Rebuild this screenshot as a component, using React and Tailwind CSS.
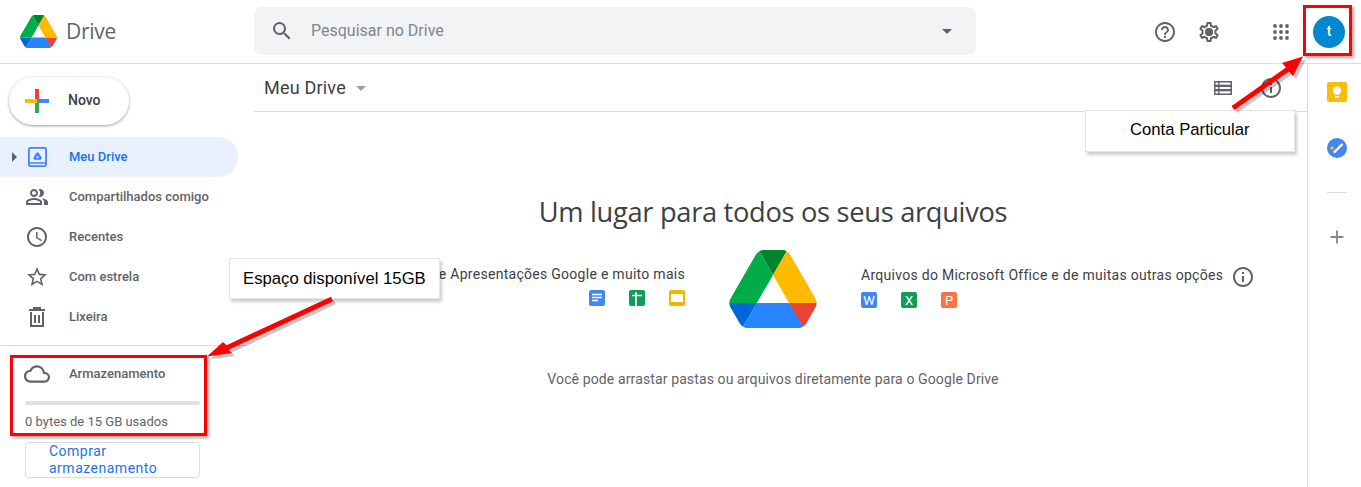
import React from "react";
import { MdSearch, MdArrowDropDown, MdHelpOutline, MdOutlineSettings, MdOutlinePeopleAlt, MdAccessTime, MdStarBorder, MdInfoOutline, MdOutlineCloud, MdAdd } from "react-icons/md";

const roboto = "font-['Roboto',sans-serif]";

function DriveLogo({ className }) {
  return (
    <svg viewBox="0 0 87.3 78" className={className}>
      <path d="m6.6 66.85 3.85 6.65c.8 1.4 1.95 2.5 3.3 3.3l13.75-23.8h-27.5c0 1.55.4 3.1 1.2 4.5z" fill="#0066da" />
      <path d="m43.65 25-13.75-23.8c-1.35.8-2.5 1.9-3.3 3.3l-25.4 44a9.06 9.06 0 0 0 -1.2 4.5h27.5z" fill="#00ac47" />
      <path d="m73.55 76.8c1.35-.8 2.5-1.9 3.3-3.3l1.6-2.75 7.65-13.25c.8-1.4 1.2-2.95 1.2-4.5h-27.502l5.852 11.5z" fill="#ea4335" />
      <path d="m43.65 25 13.75-23.8c-1.35-.8-2.9-1.2-4.5-1.2h-18.5c-1.6 0-3.15.45-4.5 1.2z" fill="#00832d" />
      <path d="m59.8 53h-32.3l-13.75 23.8c1.35.8 2.9 1.2 4.5 1.2h50.8c1.6 0 3.15-.45 4.5-1.2z" fill="#2684fc" />
      <path d="m73.4 26.5-12.7-22c-.8-1.4-1.95-2.5-3.3-3.3l-13.75 23.8 16.15 28h27.45c0-1.55-.4-3.1-1.2-4.5z" fill="#ffba00" />
    </svg>
  );
}

function PlusIcon() {
  return (
    <svg viewBox="0 0 24 24" className="w-6 h-6">
      <rect x="10" y="0" width="4" height="12" fill="#ea4335" />
      <rect x="12" y="10" width="12" height="4" fill="#4285f4" />
      <rect x="10" y="12" width="4" height="12" fill="#34a853" />
      <rect x="0" y="10" width="12" height="4" fill="#fbbc04" />
    </svg>
  );
}

function MyDriveIcon() {
  return (
    <svg viewBox="0 0 19 20" className="w-[19px] h-5" fill="none">
      <rect x="0.900" y="0.900" width="17.200" height="18.200" rx="1.500" stroke="#4285f4" strokeWidth="1.800" />
      <path d="M1 16h17" stroke="#4285f4" strokeWidth="1.500" />
      <path d="M9.500 5.200c.7 0 1.100.3 1.500 1l2.300 3.700c.8 1.400-.1 2.900-1.600 2.900H7.300c-1.500 0-2.400-1.500-1.600-2.900L8 6.200c.4-.7.800-1 1.500-1z" fill="#4285f4" />
      <path d="M9.500 8.500l-1.500 2.500h3z" fill="#e8f0fe" />
    </svg>
  );
}

function TrashIcon() {
  return (
    <svg viewBox="0 0 24 24" className="w-6 h-6" fill="none" stroke="#5f6368" strokeWidth="2">
      <path d="M6 7v14h12V7" />
      <path d="M4 5h16" />
      <path d="M9 4V3h6v1" />
      <path d="M10 10v8M14 10v8" />
    </svg>
  );
}

function ListIcon() {
  return (
    <svg viewBox="0 0 18 14" className="w-[18px] h-[14px]" fill="#5f6368">
      <path fillRule="evenodd" d="M0 0h18v14H0zM1.500 1.500v2.200h2.600V1.500zM5.500 1.500v2.200h11V1.500zM1.500 5.900v2.200h2.600V5.900zM5.500 5.900v2.200h11V5.900zM1.500 10.300v2.200h2.600v-2.200zM5.500 10.300v2.200h11v-2.200z" />
    </svg>
  );
}

function AppsIcon() {
  return (
    <svg viewBox="0 0 16 16" className="w-4 h-4" fill="#5f6368">
      {[2, 8, 14].map((y) =>
        [2, 8, 14].map((x) => <circle key={`${x}-${y}`} cx={x} cy={y} r="1.900" />)
      )}
    </svg>
  );
}

function KeepIcon() {
  return (
    <svg viewBox="0 0 20 20" className="w-5 h-5">
      <rect width="20" height="20" rx="2" fill="#fbbc04" />
      <circle cx="10" cy="8.500" r="4" fill="#fff" />
      <rect x="8" y="11" width="4" height="2" fill="#fff" />
      <rect x="8" y="14" width="4" height="1.500" fill="#fff" />
    </svg>
  );
}

function TasksIcon() {
  return (
    <svg viewBox="0 0 20 20" className="w-5 h-5">
      <circle cx="10" cy="10" r="10" fill="#4285f4" />
      <circle cx="5" cy="10" r="1.800" fill="#fbbc04" />
      <path d="M7.500 14 15 6.500" stroke="#fff" strokeWidth="2.400" strokeLinecap="round" />
    </svg>
  );
}

function SmallIcon({ color, letter, children }) {
  return (
    <div className={`w-4 h-4 rounded-[2px] flex items-center justify-center text-white text-[13px] leading-none ${color}`}>
      {letter}
      {children}
    </div>
  );
}

const navItems = [
  { label: "Compartilhados comigo", icon: <MdOutlinePeopleAlt className="w-6 h-6 text-[#5f6368]" /> },
  { label: "Recentes", icon: <MdAccessTime className="w-6 h-6 text-[#5f6368]" /> },
  { label: "Com estrela", icon: <MdStarBorder className="w-6 h-6 text-[#5f6368]" /> },
  { label: "Lixeira", icon: <TrashIcon /> },
];

function Sidebar() {
  return (
    <aside className="w-[254px] shrink-0 flex flex-col">
      <button className="ml-[9px] mt-[13px] w-[120px] h-12 rounded-full bg-white flex items-center pl-[16px] shadow-[0_1px_3px_rgba(60,64,67,0.5)] text-[14px] text-[#3c4043]">
        <PlusIcon />
        <span className="ml-[19px] -mt-px font-medium">Novo</span>
      </button>
      <nav className="mt-3 mr-4 flex flex-col text-[13px] font-medium text-[#5f6368]">
        <div className="relative h-10 w-[238px] rounded-r-full bg-[#e8f0fe] flex items-center text-[#1a73e8]">
          <svg viewBox="0 0 5 10" className="absolute left-3 w-[5px] h-[10px]" fill="#5f6368"><path d="M0 0l5 5-5 5z" /></svg>
          <div className="w-[69px] pl-[28px] flex items-center">
            <MyDriveIcon />
          </div>
          <span>Meu Drive</span>
        </div>
        {navItems.map((item) => (
          <div key={item.label} className="h-10 flex items-center">
            <div className="w-[69px] pl-[25px] flex items-center">{item.icon}</div>
            <span>{item.label}</span>
          </div>
        ))}
      </nav>
      <div className="mt-2 mr-2 h-px bg-[#dadce0]" />
      <div className="mt-4 pl-[25px] flex items-center h-6 text-[13px] font-medium text-[#5f6368]">
        <MdOutlineCloud className="w-[26px] h-[26px] -ml-px" />
        <span className="ml-[19px] -mt-px">Armazenamento</span>
      </div>
      <div className="ml-[25px] mt-[15px] w-[175px] h-1 rounded-full bg-[#e0e0e0]" />
      <div className="ml-[25px] mt-2 text-[13px] leading-[18px] text-[#5f6368]">0 bytes de 15 GB usados</div>
      <button className="ml-[25px] mt-[11px] w-[175px] h-9 rounded-[4px] border border-[#dadce0] pl-[23px] pr-6 text-left text-[14px] leading-[17px] tracking-[0.5px] text-[#1a73e8]">
        Comprar armazenamento
      </button>
    </aside>
  );
}

function Overlays() {
  return (
    <>
      {/* callouts */}
      <div className="absolute left-[229px] top-[258px] w-[211px] h-[41px] bg-white border border-[#e4e4e4] shadow-[2px_3px_3px_rgba(0,0,0,0.2)] flex items-center pl-[13px] font-['Liberation_Sans',sans-serif] text-[16.700px] text-black">
        Espaço disponível 15GB
      </div>
      <div className="absolute left-[1085px] top-[110px] w-[210px] h-[42px] bg-white border border-[#e4e4e4] shadow-[2px_3px_3px_rgba(0,0,0,0.2)] flex items-center pl-[44px] pb-[3px] font-['Liberation_Sans',sans-serif] text-[16.700px] text-black">
        Conta Particular
      </div>
      {/* red highlight boxes */}
      <div className="absolute left-[1303px] top-[5px] w-[49px] h-[51px] border-[3px] border-[#ff0000] shadow-[2px_2px_3px_rgba(0,0,0,0.35)]" />
      <div className="absolute left-[10px] top-[355px] w-[197px] h-[81px] border-[3px] border-[#ff0000] shadow-[2px_2px_3px_rgba(0,0,0,0.35)]" />
      {/* arrows */}
      <svg className="absolute left-0 top-0 w-[1361px] h-[487px] pointer-events-none" viewBox="0 0 1361 487">
        <g fill="#000" opacity="0.22" transform="translate(3 3)">
          <path d="M1231.600 106 1286 67.500 1282 63 1303 56.500 1293 76 1288.900 71.500 1234.400 110z" />
          <path d="M331 296.700 226.500 345.200 223 342 207 356.500 232 353 228.500 349.800 333 301.300z" />
        </g>
        <g fill="#ff0000">
          <path d="M1231.600 106 1286 67.500 1282 63 1303 56.500 1293 76 1288.900 71.500 1234.400 110z" />
          <path d="M331 296.700 226.500 345.200 223 342 207 356.500 232 353 228.500 349.800 333 301.300z" />
        </g>
      </svg>
    </>
  );
}

export default function App() {
  return (
    <div className={`relative w-[1361px] h-[487px] overflow-hidden bg-white ${roboto}`}>
      <header className="h-16 border-b border-[#dadce0] flex items-center">
        <div className="w-[254px] shrink-0 flex items-center pl-5">
          <DriveLogo className="w-[37px] h-[33px]" />
          <span className="ml-[9px] text-[21px] text-[#5f6368] font-['Open_Sans',sans-serif] tracking-[-0.3px]">Drive</span>
        </div>
        <div className="w-[722px] h-12 -mt-px rounded-lg bg-[#f1f3f4] flex items-center pl-4 pr-[17px]">
          <MdSearch className="w-6 h-6 text-[#5f6368]" />
          <span className="ml-[17px] flex-1 text-[16px] text-[#80868b]">Pesquisar no Drive</span>
          <MdArrowDropDown className="w-6 h-6 text-[#5f6368]" />
        </div>
        <div className="ml-auto flex items-center pr-[16px] text-[#5f6368]">
          <MdHelpOutline className="w-6 h-6" />
          <div className="relative ml-5 w-6 h-6 flex items-center justify-center">
            <MdOutlineSettings className="w-6 h-6" />
            <div className="absolute w-2 h-2 rounded-full bg-[#5f6368]" />
          </div>
          <div className="ml-[52px]"><AppsIcon /></div>
          <div className="ml-6 w-8 h-8 rounded-full bg-[#0288d1] flex items-center justify-center text-white text-[14px] font-medium">t</div>
        </div>
      </header>
      <div className="flex h-[423px]">
        <Sidebar />
        <main className="flex-1 flex flex-col">
          <div className="h-12 border-b border-[#dadce0] flex items-center pl-[10px] pr-[24px] text-[#5f6368]">
            <span className="text-[18px] tracking-[0.2px] text-[#3c4043]">Meu Drive</span>
            <MdArrowDropDown className="ml-[3px] w-6 h-6 text-[#9aa0a6]" />
            <div className="ml-auto flex items-center">
              <ListIcon />
              <MdInfoOutline className="ml-[27px] w-6 h-6" />
            </div>
          </div>
          <div className="mr-[15px] flex flex-col items-center">
            <h1 className="mt-[83px] text-[27.250px] leading-[34px] text-[#3c4043] font-['Open_Sans',sans-serif] tracking-[-0.3px]">Um lugar para todos os seus arquivos</h1>
            <div className="mt-[21px] w-full grid grid-cols-[1fr_88px_1fr] gap-x-[44px]">
              <div className="flex flex-col items-end whitespace-nowrap">
                <p className="mt-[14px] text-[14px] leading-5 tracking-[0.28px] text-[#3c4043]">e Apresentações Google e muito mais</p>
                <div className="mt-[6px] flex gap-6">
                  <SmallIcon color="bg-[#4285f4]">
                    <svg viewBox="0 0 16 16" className="w-4 h-4" fill="none" stroke="#fff" strokeWidth="1.600"><path d="M3 4.500h10M3 7.500h10M3 10.500h6" /></svg>
                  </SmallIcon>
                  <SmallIcon color="bg-[#0f9d58]">
                    <svg viewBox="0 0 16 16" className="w-4 h-4" fill="none" stroke="#fff" strokeWidth="1.600"><path d="M3 5.500h10M7 2v14" /></svg>
                  </SmallIcon>
                  <SmallIcon color="bg-[#f4b400]">
                    <svg viewBox="0 0 16 16" className="w-4 h-4"><rect x="2" y="4" width="12" height="8" fill="#fff" /></svg>
                  </SmallIcon>
                </div>
              </div>
              <DriveLogo className="w-[88px] h-[78px]" />
              <div className="flex flex-col items-start whitespace-nowrap">
                <div className="flex items-center mt-[15px]">
                  <p className="mb-1 text-[14px] leading-5 tracking-[0.28px] text-[#3c4043]">Arquivos do Microsoft Office e de muitas outras opções</p>
                  <MdInfoOutline className="ml-2 w-6 h-6 text-[#5f6368]" />
                </div>
                <div className="mt-[3px] flex gap-6">
                  <SmallIcon color="bg-[#4285f4]" letter="W" />
                  <SmallIcon color="bg-[#0f9d58]" letter="X" />
                  <SmallIcon color="bg-[#ff7043]" letter="P" />
                </div>
              </div>
            </div>
            <p className="mt-[41px] text-[14px] leading-5 tracking-[0.12px] text-[#5f6368]">Você pode arrastar pastas ou arquivos diretamente para o Google Drive</p>
          </div>
        </main>
        <div className="w-[54px] shrink-0 border-l border-[#dadce0] flex flex-col items-center pl-[4px]">
          <div className="mt-[18px]"><KeepIcon /></div>
          <div className="mt-[36px]"><TasksIcon /></div>
          <div className="mt-[34px] w-5 h-px bg-[#dadce0]" />
          <MdAdd className="mt-[33px] w-[22px] h-[22px] text-[#80868b]" />
        </div>
      </div>
      <Overlays />
    </div>
  );
}
